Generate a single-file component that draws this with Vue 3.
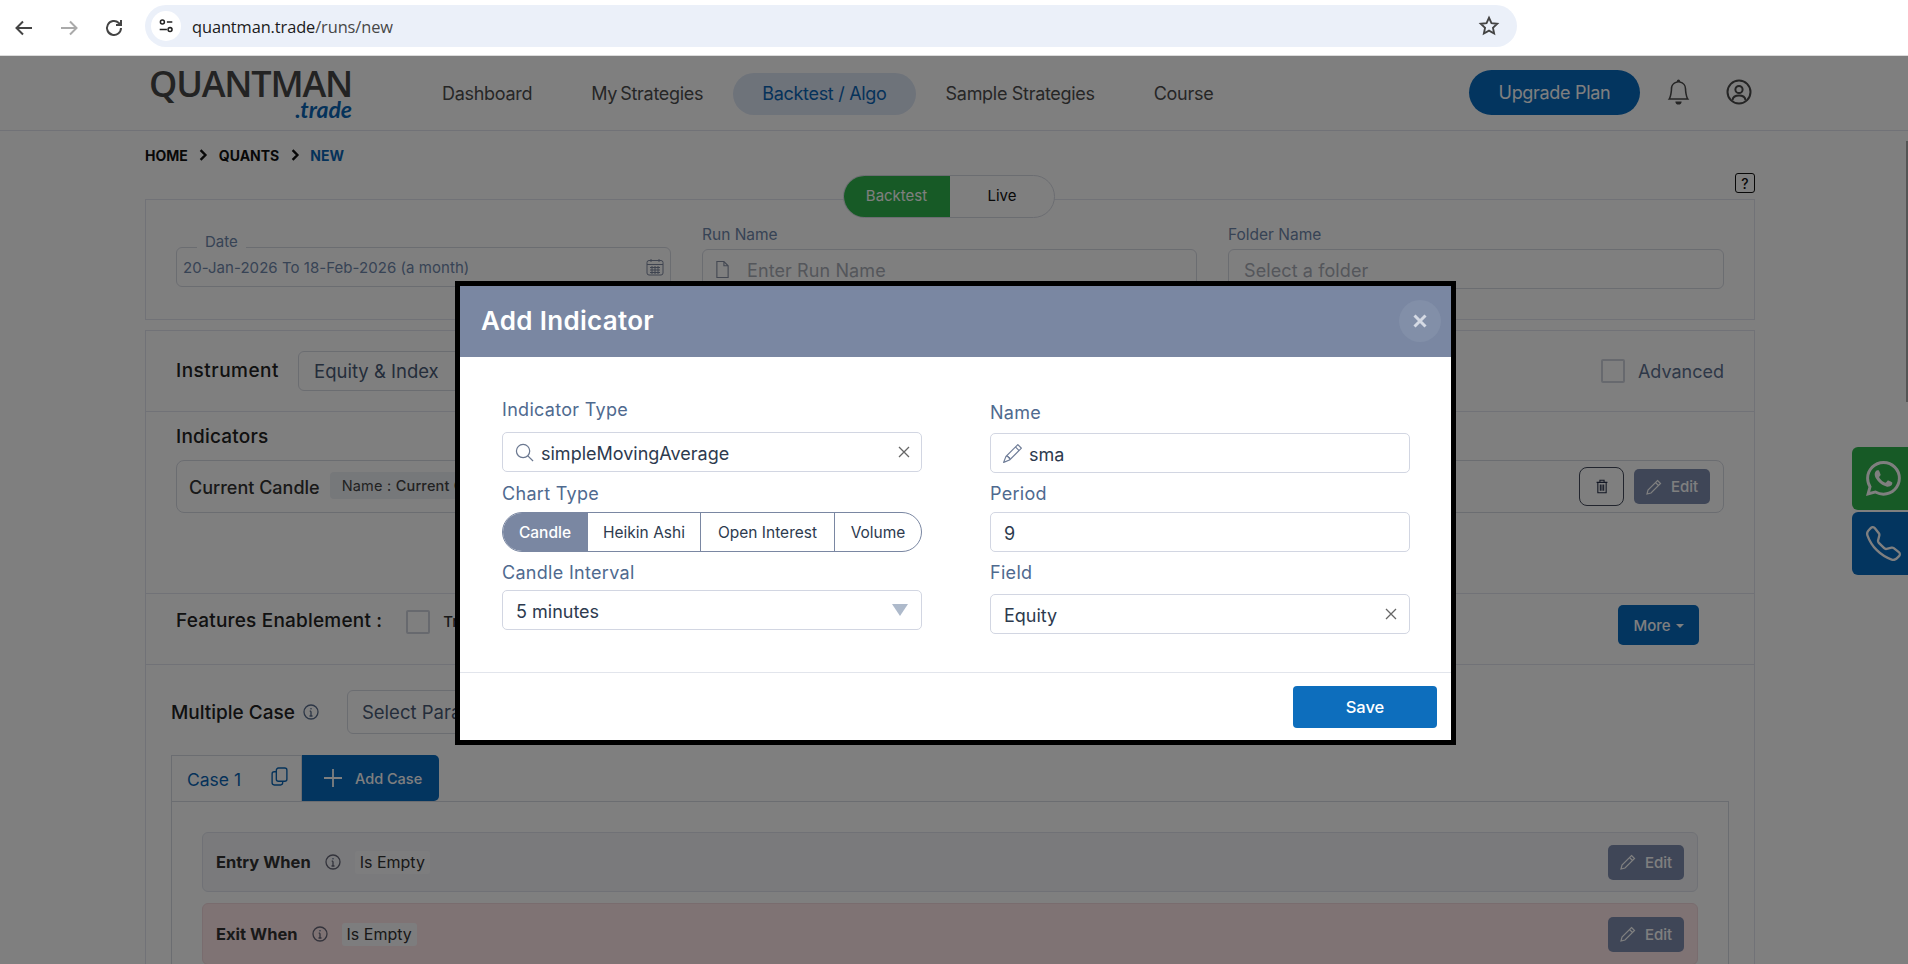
<script setup>
const navItems = [
  { label: 'Dashboard' },
  { label: 'My Strategies' },
  { label: 'Backtest / Algo', active: true },
  { label: 'Sample Strategies' },
  { label: 'Course' },
];

const chartTypes = ['Candle', 'Heikin Ashi', 'Open Interest', 'Volume'];

const caseRows = [
  { label: 'Entry When', tone: 'entry' },
  { label: 'Exit When', tone: 'exit' },
];

const icons = {
  pencil:
    'M12.146.146a.5.5 0 0 1 .708 0l3 3a.5.5 0 0 1 0 .708l-10 10a.5.5 0 0 1-.168.11l-5 2a.5.5 0 0 1-.65-.65l2-5a.5.5 0 0 1 .11-.168l10-10zM11.207 2.5 13.5 4.793 14.793 3.5 12.5 1.207 11.207 2.5zm1.586 3L10.5 3.207 4 9.707V10h.5a.5.5 0 0 1 .5.5v.5h.5a.5.5 0 0 1 .5.5v.5h.293l6.5-6.5zm-9.761 5.175-.106.106-1.528 3.821 3.821-1.528.106-.106A.5.5 0 0 1 5 12.5V12h-.5a.5.5 0 0 1-.5-.5V11h-.5a.5.5 0 0 1-.468-.325z',
  bell:
    'M8 16a2 2 0 0 0 2-2H6a2 2 0 0 0 2 2zM8 1.918l-.797.161A4.002 4.002 0 0 0 4 6c0 .628-.134 2.197-.459 3.742-.16.767-.376 1.566-.663 2.258h10.244c-.287-.692-.502-1.49-.663-2.258C12.134 8.197 12 6.628 12 6a4.002 4.002 0 0 0-3.203-3.92L8 1.917zM14.22 12c.223.447.481.801.78 1H1c.299-.199.557-.553.78-1C2.68 10.2 3 6.88 3 6c0-2.42 1.72-4.44 4.005-4.901a1 1 0 1 1 1.99 0A5.002 5.002 0 0 1 13 6c0 .88.32 4.2 1.22 6z',
  phone:
    'M3.654 1.328a.678.678 0 0 0-1.015-.063L1.605 2.3c-.483.484-.661 1.169-.45 1.77a17.568 17.568 0 0 0 4.168 6.608 17.569 17.569 0 0 0 6.608 4.168c.601.211 1.286.033 1.77-.45l1.034-1.034a.678.678 0 0 0-.063-1.015l-2.307-1.794a.678.678 0 0 0-.58-.122l-2.19.547a1.745 1.745 0 0 1-1.657-.459L5.482 8.062a1.745 1.745 0 0 1-.46-1.657l.548-2.19a.678.678 0 0 0-.122-.58L3.654 1.328zM1.884.511a1.745 1.745 0 0 1 2.612.163L6.29 2.98c.329.423.445.974.315 1.494l-.547 2.19a.678.678 0 0 0 .178.643l2.457 2.457a.678.678 0 0 0 .644.178l2.189-.547a1.745 1.745 0 0 1 1.494.315l2.306 1.794c.829.645.905 1.87.163 2.611l-1.034 1.034c-.74.74-1.846 1.065-2.877.702a18.634 18.634 0 0 1-7.01-4.42 18.634 18.634 0 0 1-4.42-7.009c-.362-1.03-.037-2.137.703-2.877L1.885.511z',
  whatsapp:
    'M13.601 2.326A7.854 7.854 0 0 0 7.994 0C3.627 0 .068 3.558.064 7.926c0 1.399.366 2.76 1.057 3.965L0 16l4.204-1.102a7.933 7.933 0 0 0 3.79.965h.004c4.368 0 7.926-3.558 7.93-7.93A7.898 7.898 0 0 0 13.6 2.326zM7.994 14.521a6.573 6.573 0 0 1-3.356-.92l-.24-.144-2.494.654.666-2.433-.156-.251a6.56 6.56 0 0 1-1.007-3.505c0-3.626 2.957-6.584 6.591-6.584a6.56 6.56 0 0 1 4.66 1.931 6.557 6.557 0 0 1 1.928 4.66c-.004 3.639-2.961 6.592-6.592 6.592zm3.615-4.934c-.197-.099-1.17-.578-1.353-.646-.182-.065-.315-.099-.445.099-.133.197-.513.646-.627.775-.114.133-.232.148-.43.05-.197-.1-.836-.308-1.592-.985-.59-.525-.985-1.175-1.103-1.372-.114-.198-.011-.304.088-.403.087-.088.197-.232.296-.346.1-.114.133-.198.198-.33.065-.134.034-.248-.015-.347-.05-.099-.445-1.076-.612-1.47-.16-.389-.323-.335-.445-.34-.114-.007-.247-.007-.38-.007a.729.729 0 0 0-.529.247c-.182.198-.691.677-.691 1.654 0 .977.71 1.916.81 2.049.098.133 1.394 2.132 3.383 2.992.47.205.84.326 1.129.418.475.152.904.129 1.246.08.38-.058 1.171-.48 1.338-.943.164-.464.164-.86.114-.943-.049-.084-.182-.133-.38-.232z',
};
</script>

<template>
  <div class="window">
    <header class="chrome">
      <svg class="chrome__nav" viewBox="0 0 24 24"><path d="M20 12H5M11 5.500 4.500 12l6.500 6.500" /></svg>
      <svg class="chrome__nav chrome__nav--off" viewBox="0 0 24 24"><path d="M4 12h15M13 5.500l6.500 6.500-6.500 6.500" /></svg>
      <svg class="chrome__nav" viewBox="0 0 24 24"><path d="M19 12a7 7 0 1 1-2.200-5.100L19 9M19 4v5h-5" /></svg>
      <div class="omnibox">
        <span class="omnibox__info">
          <svg viewBox="0 0 20 20"><circle cx="6" cy="5.500" r="2.200" /><path d="M11 5.500h6M3 14h8" /><circle cx="14.500" cy="14" r="2.200" /></svg>
        </span>
        <span class="omnibox__url">quantman.trade<span class="omnibox__path">/runs/new</span></span>
        <svg class="omnibox__star" viewBox="0 0 24 24"><path d="m12 3 2.700 5.900 6.300.7-4.700 4.300 1.300 6.300-5.600-3.200-5.600 3.200 1.300-6.300L3 9.600l6.300-.7z" /></svg>
      </div>
    </header>

    <div class="page">
      <nav class="topbar">
        <div class="logo">
          <span class="logo__name">QUANTMAN</span>
          <span class="logo__tld">.trade</span>
        </div>
        <div class="topbar__links">
          <a v-for="item in navItems" :key="item.label" class="topbar__link" :class="{ 'is-active': item.active }">{{ item.label }}</a>
        </div>
        <button class="upgrade">Upgrade Plan</button>
        <svg class="topbar__bell" viewBox="0 0 16 16"><path :d="icons.bell" /></svg>
        <svg class="topbar__user" viewBox="0 0 26 26">
          <circle cx="13" cy="13" r="11.500" />
          <circle cx="13" cy="10.500" r="3.600" />
          <path d="M6.500 21c.500-3.500 3-4.500 6.500-4.500s6 1 6.500 4.500" />
        </svg>
      </nav>

      <main class="content">
        <div class="crumbs">
          <span>HOME</span>
          <svg viewBox="0 0 10 10"><path d="m3 1 4 4-4 4" /></svg>
          <span>QUANTS</span>
          <svg viewBox="0 0 10 10"><path d="m3 1 4 4-4 4" /></svg>
          <span class="crumbs__current">NEW</span>
        </div>

        <section class="card card--run">
          <div class="mode">
            <span class="mode__item is-active">Backtest</span>
            <span class="mode__item">Live</span>
          </div>
          <span class="help">?</span>

          <div class="run-col">
            <div class="date-box">
              <span class="date-box__label">Date</span>
              <span class="date-box__value">20-Jan-2026 To 18-Feb-2026 (a month)</span>
              <svg class="date-box__icon" viewBox="0 0 18 18">
                <rect x="1" y="2.500" width="16" height="14.500" rx="2" />
                <path d="M1 6.500h16M5 1v3M13 1v3M4 9.500h10M4 12h10M4 14.500h10M6 8v8M9 8v8M12 8v8" />
              </svg>
            </div>
          </div>
          <div class="run-col">
            <label class="run-label">Run Name</label>
            <div class="run-input">
              <svg class="run-input__icon" viewBox="0 0 16 20"><path d="M2 1.500h7.500L14 6v12.500H2zM9.500 1.500V6H14" /></svg>
              <span class="run-input__hint">Enter Run Name</span>
            </div>
          </div>
          <div class="run-col">
            <label class="run-label">Folder Name</label>
            <div class="run-input run-input--folder">
              <span class="run-input__hint">Select a folder</span>
            </div>
          </div>
        </section>

        <section class="card card--main">
          <div class="instrument">
            <span class="section-title">Instrument</span>
            <div class="plain-select">Equity &amp; Index</div>
            <span class="check check--advanced"></span>
            <span class="advanced">Advanced</span>
          </div>

          <div class="indicators">
            <div class="section-title">Indicators</div>
            <div class="indicator-row">
              <span class="indicator-row__name">Current Candle</span>
              <span class="indicator-row__tag">Name : <b>Current Candle</b></span>
              <button class="trash-btn">
                <svg viewBox="0 0 16 18"><path d="M1.500 4h13M5.500 4V1.500h5V4M3 4v12.500h10V4M6 6.500v7.500M8 6.500v7.500M10 6.500v7.500" /></svg>
              </button>
              <button class="edit-btn">
                <svg viewBox="0 0 16 16"><path d="M11.500 1.500 14.500 4.500 5 14l-4 1 1-4zM9.500 3.500l3 3" /></svg>
                Edit
              </button>
            </div>
          </div>

          <div class="features">
            <span class="section-title features__title">Features Enablement :</span>
            <span class="check features__check"></span>
            <span class="features__item">Trailing</span>
            <button class="more">More <i class="more__caret"></i></button>
          </div>

          <div class="cases">
            <div class="cases__head">
              <span class="section-title">Multiple Case</span>
              <svg class="info" viewBox="0 0 16 16"><circle cx="8" cy="8" r="7" /><path d="M8 7.200V12M6.500 12h3M6.700 7.200H8" /><circle class="info__dot" cx="8" cy="4.700" r=".8" /></svg>
              <div class="plain-select plain-select--param">Select Parameters</div>
            </div>

            <div class="tabs">
              <div class="tab">
                <span class="tab__label">Case 1</span>
                <svg class="tab__copy" viewBox="0 0 16 18"><rect x="5" y="1" width="10" height="12.500" rx="2" /><path d="M5 4.500H3a2 2 0 0 0-2 2V15a2 2 0 0 0 2 2h6a2 2 0 0 0 2-2v-1.500" /></svg>
              </div>
              <button class="add-case">
                <svg viewBox="0 0 18 18"><path d="M9 0v18M0 9h18" /></svg>
                Add Case
              </button>
            </div>

            <div class="case-body">
              <div v-for="row in caseRows" :key="row.label" class="case-row" :class="`case-row--${row.tone}`">
                <span class="case-row__label">{{ row.label }}</span>
                <svg class="info case-row__info" viewBox="0 0 16 16"><circle cx="8" cy="8" r="7" /><path d="M8 7.200V12M6.500 12h3M6.700 7.200H8" /><circle class="info__dot" cx="8" cy="4.700" r=".8" /></svg>
                <span class="case-row__tag">Is Empty</span>
                <button class="edit-btn case-row__edit">
                  <svg viewBox="0 0 16 16"><path d="M11.500 1.500 14.500 4.500 5 14l-4 1 1-4zM9.500 3.500l3 3" /></svg>
                  Edit
                </button>
              </div>
            </div>
          </div>
        </section>
      </main>

      <div class="side-contact">
        <a class="side-contact__btn side-contact__btn--whatsapp">
          <svg viewBox="0 0 16 16"><path :d="icons.whatsapp" /></svg>
        </a>
        <a class="side-contact__btn side-contact__btn--phone">
          <svg viewBox="0 0 16 16"><path :d="icons.phone" /></svg>
        </a>
      </div>

      <div class="backdrop">
        <div class="scroll-thumb"></div>
        <div class="modal">
          <div class="modal__head">
            <h2 class="modal__title">Add Indicator</h2>
            <button class="modal__close">
              <svg viewBox="0 0 16 16"><path d="m2.500 2.500 11 11M13.500 2.500l-11 11" /></svg>
            </button>
          </div>

          <div class="modal__body">
            <div class="modal__col">
              <label class="field-label">Indicator Type</label>
              <div class="field field--type">
                <svg class="field__search" viewBox="0 0 20 20"><circle cx="8.500" cy="8.500" r="7" /><path d="m13.500 13.500 5.500 5.500" /></svg>
                <span class="field__value">simpleMovingAverage</span>
                <svg class="field__clear" viewBox="0 0 12 12"><path d="m1 1 10 10M11 1 1 11" /></svg>
              </div>

              <label class="field-label field-label--chart">Chart Type</label>
              <div class="segments">
                <span v-for="(chart, i) in chartTypes" :key="chart" class="segments__item" :class="{ 'is-active': i === 0 }">{{ chart }}</span>
              </div>

              <label class="field-label field-label--interval">Candle Interval</label>
              <div class="field field--interval">
                <span class="field__value">5 minutes</span>
                <i class="field__caret"></i>
              </div>
            </div>

            <div class="modal__col modal__col--right">
              <label class="field-label">Name</label>
              <div class="field field--name">
                <svg class="field__pencil" viewBox="0 0 16 16"><path :d="icons.pencil" /></svg>
                <span class="field__value">sma</span>
              </div>

              <label class="field-label field-label--period">Period</label>
              <div class="field field--period">
                <span class="field__value">9</span>
              </div>

              <label class="field-label field-label--field">Field</label>
              <div class="field field--equity">
                <span class="field__value">Equity</span>
                <svg class="field__clear" viewBox="0 0 12 12"><path d="m1 1 10 10M11 1 1 11" /></svg>
              </div>
            </div>
          </div>

          <div class="modal__foot">
            <button class="save">Save</button>
          </div>
        </div>
      </div>
    </div>
  </div>
</template>

<style>
html,
body {
  margin: 0;
  height: 100%;
  overflow: hidden;
}
</style>

<style scoped>
.window {
  width: 1908px;
  height: 964px;
  overflow: hidden;
  font-family: Inter, "Noto Sans", sans-serif;
  background: #fff;
}

button {
  font-family: inherit;
  border: 0;
  cursor: pointer;
}

svg {
  display: block;
  flex-shrink: 0;
  fill: none;
}

/* browser bar */
.chrome {
  height: 56px;
  display: flex;
  align-items: center;
  padding-left: 12px;
  box-sizing: border-box;
  background: #fff;
  border-bottom: 1px solid #dcdcdc;
}

.chrome__nav {
  width: 24px;
  height: 24px;
  margin-right: 21px;
  stroke: #444;
  stroke-width: 2;
}

.chrome__nav--off {
  stroke: #aaa;
}

.omnibox {
  width: 1372px;
  height: 42px;
  margin-left: -2px;
  margin-top: -3px;
  display: flex;
  align-items: center;
  padding: 0 17px 0 6px;
  box-sizing: border-box;
  border-radius: 21px;
  background: #ebf0f9;
}

.omnibox__info {
  width: 30px;
  height: 30px;
  display: flex;
  align-items: center;
  justify-content: center;
  border-radius: 50%;
  background: #fff;
}

.omnibox__info svg {
  width: 18px;
  height: 18px;
  stroke: #222;
  stroke-width: 1.700;
}

.omnibox__url {
  margin-left: 11px;
  font-family: "Open Sans", sans-serif;
  font-size: 16.400px;
  letter-spacing: -0.1px;
  color: #1b1b1b;
}

.omnibox__path {
  color: #474747;
}

.omnibox__star {
  width: 22px;
  height: 22px;
  margin-left: auto;
  stroke: #444;
  stroke-width: 2;
}

/* page */
.page {
  position: relative;
  height: 908px;
  overflow: hidden;
  background: #fff;
}

.topbar {
  height: 75px;
  display: flex;
  align-items: center;
  box-sizing: border-box;
  padding-left: 152px;
  border-bottom: 1px solid #e2e4ee;
}

.logo {
  width: 200px;
  display: flex;
  flex-direction: column;
  align-items: flex-end;
}

.logo__name {
  font-family: "Open Sans", sans-serif;
  font-size: 36px;
  font-weight: 600;
  line-height: 32px;
  letter-spacing: -1.200px;
  color: #474747;
}

.logo__tld {
  font-family: Lato, sans-serif;
  font-size: 23px;
  font-style: italic;
  font-weight: 700;
  line-height: 18px;
  color: #0a65b4;
}

.topbar__links {
  display: flex;
  align-items: center;
  margin-left: 60.500px;
  margin-top: 1px;
}

.topbar__link {
  padding: 0 29.500px;
  height: 42px;
  line-height: 42px;
  border-radius: 21px;
  font-size: 18px;
  letter-spacing: -0.300px;
  color: #4d4d4d;
}

.topbar__link:nth-child(2) {
  word-spacing: -1.500px;
}

.topbar__link.is-active {
  background: #dde6f5;
  color: #0a65b4;
}

.upgrade {
  width: 171px;
  height: 45px;
  margin-left: auto;
  margin-top: -2px;
  border-radius: 23px;
  background: #076abf;
  color: #fff;
  font-size: 18px;
  letter-spacing: -0.300px;
}

.topbar__bell {
  width: 25px;
  height: 26px;
  margin-left: 26px;
  margin-top: -2px;
  fill: #4a4a4a;
}

.topbar__user {
  width: 26px;
  height: 26px;
  margin-left: 35px;
  margin-right: 156px;
  margin-top: -2px;
  stroke: #4a4a4a;
  stroke-width: 2;
}

.content {
  width: 1610px;
  margin-left: 145px;
}

.crumbs {
  height: 20px;
  margin-top: 14px;
  display: flex;
  align-items: center;
  font-size: 14px;
  font-weight: 700;
  color: #111;
}

.crumbs svg {
  width: 12px;
  height: 12px;
  margin: 0 9.500px;
  stroke: #111;
  stroke-width: 2;
}

.crumbs__current {
  color: #0a65b4;
}

.card {
  box-sizing: border-box;
  border: 1px solid #e2e4ee;
  background: #fff;
}

.card--run {
  position: relative;
  height: 121px;
  margin-top: 34px;
  padding: 25px 30px 0;
  display: grid;
  grid-template-columns: 495px 495px 496px;
  column-gap: 31px;
}

.card--main {
  margin-top: 10px;
}

.mode {
  position: absolute;
  top: -25px;
  left: 697px;
  width: 212px;
  height: 43px;
  display: flex;
  overflow: hidden;
  box-sizing: border-box;
  border: 1px solid #d7dae3;
  border-radius: 22px;
  background: #fff;
  font-size: 15px;
}

.mode__item {
  flex: 1;
  display: flex;
  align-items: center;
  justify-content: center;
  padding-bottom: 2px;
  color: #111;
}

.mode__item.is-active {
  flex: 0 0 107px;
  margin: -1px 0 -1px -1px;
  background: #2eb44c;
  color: #fff;
}

.help {
  position: absolute;
  top: -27px;
  right: -1px;
  width: 20px;
  height: 20px;
  box-sizing: border-box;
  display: flex;
  align-items: center;
  justify-content: center;
  border: 1.500px solid #111;
  border-radius: 3px;
  font-size: 14px;
  font-weight: 500;
  color: #111;
}

.date-box {
  position: relative;
  height: 40px;
  margin-top: 22px;
  display: flex;
  align-items: center;
  padding: 0 6px;
  box-sizing: border-box;
  border: 1px solid #d7dae3;
  border-radius: 6px;
}

.date-box__label {
  position: absolute;
  top: -16px;
  left: 20px;
  padding: 0 8px;
  background: #fff;
  font-size: 15px;
  line-height: 20px;
  color: #6e86aa;
}

.date-box__value {
  font-size: 15px;
  letter-spacing: 0.050px;
  color: #6f87ab;
}

.date-box__icon {
  width: 18px;
  height: 18px;
  margin-left: auto;
  stroke: #7e88a0;
  stroke-width: 1;
}

.run-label {
  display: block;
  height: 20px;
  font-size: 15.500px;
  line-height: 20px;
  color: #6e86aa;
}

.run-input {
  height: 40px;
  margin-top: 4px;
  display: flex;
  align-items: center;
  padding: 0 12px;
  box-sizing: border-box;
  border: 1px solid #d7dae3;
  border-radius: 6px;
}

.run-input--folder {
  padding-left: 15px;
}

.run-input__icon {
  width: 15px;
  height: 19px;
  margin: 0 17px 0 0;
  stroke: #8891a5;
  stroke-width: 1.200;
}

.run-input__hint {
  margin-top: 3px;
  font-size: 18px;
  letter-spacing: 0.100px;
  color: #a9adb6;
}

.section-title {
  font-size: 19px;
  font-weight: 500;
  line-height: 20px;
  letter-spacing: 0.200px;
  color: #222;
}

.instrument {
  height: 81px;
  display: flex;
  align-items: center;
  padding: 0 30px;
  box-sizing: border-box;
  border-bottom: 1px solid #e2e4ee;
}

.instrument .section-title {
  letter-spacing: 0.500px;
}

.plain-select {
  height: 40px;
  width: 300px;
  margin-left: 19px;
  display: flex;
  align-items: center;
  padding: 0 15px;
  box-sizing: border-box;
  border: 1px solid #d7dae3;
  border-radius: 6px;
  font-size: 18.500px;
  color: #4a5b76;
}

.check {
  width: 24px;
  height: 24px;
  box-sizing: border-box;
  border: 2px solid #cfd3dc;
  border-radius: 2px;
  background: #fff;
}

.check--advanced {
  margin-left: auto;
}

.advanced {
  margin-left: 13px;
  font-size: 18px;
  color: #5c7090;
}

.indicators {
  height: 182px;
  padding: 15px 30px 0;
  box-sizing: border-box;
  border-bottom: 1px solid #e2e4ee;
}

.indicator-row {
  height: 53px;
  margin-top: 13px;
  display: flex;
  align-items: center;
  padding: 0 13px 0 12px;
  box-sizing: border-box;
  border: 1px solid #d7dae3;
  border-radius: 8px;
}

.indicator-row__name {
  padding-top: 2px;
  font-size: 18px;
  font-weight: 500;
  color: #333;
}

.indicator-row__tag {
  margin-left: 10px;
  margin-top: -3px;
  padding: 4px 12px;
  border-radius: 4px;
  background: #edf0f5;
  font-size: 14.500px;
  line-height: 19px;
  letter-spacing: 0.200px;
  color: #444;
}

.indicator-row__tag b {
  font-weight: 500;
}

.trash-btn {
  width: 45px;
  height: 39px;
  margin-left: auto;
  display: flex;
  align-items: center;
  justify-content: center;
  box-sizing: border-box;
  border: 1px solid #444b5c;
  border-radius: 8px;
  background: #fff;
}

.trash-btn svg {
  width: 14px;
  height: 15px;
  stroke: #26304a;
  stroke-width: 1.300;
}

.edit-btn {
  width: 76px;
  height: 35px;
  margin-left: 10px;
  display: flex;
  align-items: center;
  justify-content: center;
  gap: 9px;
  border-radius: 5px;
  background: #7f8daf;
  color: #fff;
  font-size: 15px;
  font-weight: 500;
}

.edit-btn svg {
  width: 16px;
  height: 16px;
  stroke: #fff;
  stroke-width: 1.200;
}

.features {
  height: 71px;
  display: flex;
  align-items: center;
  padding: 0 55px 20px 30px;
  box-sizing: border-box;
  border-bottom: 1px solid #e2e4ee;
}

.features__title {
  margin-top: 12px;
  margin-bottom: 8px;
}

.features__check {
  margin-left: 24px;
  margin-top: 10px;
  margin-bottom: 4px;
}

.features__item {
  margin-left: 13px;
  margin-top: 12px;
  margin-bottom: 8px;
  font-size: 15px;
  font-weight: 500;
  color: #333;
}

.more {
  width: 81px;
  height: 40px;
  margin-left: auto;
  margin-top: 12px;
  border-radius: 5px;
  background: #076abf;
  color: #fff;
  font-size: 15px;
  font-weight: 500;
}

.more__caret {
  display: inline-block;
  margin-left: 1px;
  vertical-align: 3px;
  border-top: 4px solid #fff;
  border-left: 4px solid transparent;
  border-right: 4px solid transparent;
}

.cases {
  padding: 25px 25px 0;
}

.cases__head {
  height: 44px;
  display: flex;
  align-items: center;
}

.cases__head .section-title {
  padding-top: 2px;
  letter-spacing: 0;
}

.info {
  width: 16px;
  height: 16px;
  margin-left: 8px;
  stroke: #5a6d8c;
  stroke-width: 1.300;
}

.info__dot {
  fill: #5a6d8c;
  stroke: none;
}

.plain-select--param {
  height: 44px;
  margin-left: 28px;
  padding-left: 14px;
}

.tabs {
  height: 46px;
  margin-top: 21px;
  display: flex;
}

.tab {
  width: 131px;
  display: flex;
  align-items: center;
  padding-left: 15px;
  box-sizing: border-box;
  border: 1px solid #d7dae3;
  border-bottom: 0;
}

.tab__label {
  padding-top: 2px;
  font-size: 17.500px;
  color: #0a65b4;
}

.tab__copy {
  width: 17px;
  height: 19px;
  margin-left: 30px;
  margin-top: -4px;
  stroke: #0a65b4;
  stroke-width: 1.300;
}

.add-case {
  width: 137px;
  display: flex;
  align-items: center;
  padding-left: 22px;
  gap: 13px;
  border-radius: 0 5px 5px 0;
  background: #076abf;
  color: #fff;
  font-size: 14.500px;
  font-weight: 500;
}

.add-case svg {
  width: 18px;
  height: 18px;
  stroke: #fff;
  stroke-width: 1.800;
}

.case-body {
  padding: 30px 30px 40px;
  box-sizing: border-box;
  border: 1px solid #d7dae3;
}

.case-row {
  height: 60px;
  display: flex;
  align-items: center;
  padding: 0 13px;
  box-sizing: border-box;
  border: 1px solid #e0e3ec;
  border-radius: 6px;
  background: #f4f5f9;
}

.case-row + .case-row {
  height: 62px;
  margin-top: 11px;
}

.case-row--exit {
  border-color: #f2d8dc;
  background: #ffe6e8;
}

.case-row__label {
  font-size: 16.500px;
  font-weight: 700;
  color: #333;
}

.case-row__info {
  margin-left: 14px;
  stroke: #667;
}

.case-row__tag {
  margin-left: 14px;
  padding: 2px 5px;
  border-radius: 3px;
  background: #fbfbfd;
  font-size: 16px;
  line-height: 19px;
  color: #333;
}

.case-row__edit {
  margin-left: auto;
}

/* floating contact buttons */
.side-contact {
  position: absolute;
  top: 391px;
  right: 0;
  display: flex;
  flex-direction: column;
  gap: 2px;
}

.side-contact__btn {
  width: 56px;
  height: 63px;
  display: flex;
  align-items: center;
  padding-left: 14px;
  box-sizing: border-box;
  border-radius: 6px 0 0 6px;
}

.side-contact__btn svg {
  width: 35px;
  height: 35px;
  fill: #fff;
}

.side-contact__btn--whatsapp {
  background: #2eb44c;
}

.side-contact__btn--phone {
  background: #076abf;
}

/* modal */
.backdrop {
  position: absolute;
  inset: 0;
  display: flex;
  justify-content: center;
  align-items: flex-start;
  padding: 225px 0 0 3px;
  box-sizing: border-box;
  background: rgba(0, 0, 0, 0.5);
}

.scroll-thumb {
  position: absolute;
  top: 85px;
  right: 0;
  width: 2px;
  height: 261px;
  background: #555;
}

.modal {
  width: 1001px;
  height: 464px;
  box-sizing: border-box;
  border: 5px solid #000;
  background: #fff;
}

.modal__head {
  height: 71px;
  display: flex;
  align-items: center;
  justify-content: space-between;
  padding: 0 10px 2px 21px;
  box-sizing: border-box;
  background: #7a87a2;
}

.modal__title {
  margin: 0;
  font-size: 26px;
  font-weight: 600;
  letter-spacing: 0.300px;
  color: #fff;
}

.modal__close {
  width: 42px;
  height: 42px;
  display: flex;
  align-items: center;
  justify-content: center;
  padding: 0;
  border-radius: 50%;
  background: #828fa8;
}

.modal__close svg {
  width: 16px;
  height: 16px;
  stroke: #d5dae4;
  stroke-width: 3;
}

.modal__body {
  height: 316px;
  display: grid;
  grid-template-columns: 420px 420px;
  column-gap: 68px;
  padding: 41px 0 0 42px;
  box-sizing: border-box;
  border-bottom: 1px solid #e2e5ec;
}

.modal__col--right {
  padding-top: 3px;
}

.field-label {
  display: block;
  height: 22px;
  font-size: 18px;
  line-height: 24px;
  letter-spacing: 0.300px;
  color: #4f6a8f;
}

.field-label--chart {
  margin-top: 10px;
}

.field-label--interval,
.field-label--period,
.field-label--field {
  margin-top: 9px;
}

.field {
  height: 40px;
  display: flex;
  align-items: center;
  padding: 0 12px;
  box-sizing: border-box;
  border: 1px solid #d2d6e2;
  border-radius: 5px;
  background: #fff;
}

.field--type {
  margin-top: 12px;
  padding-right: 11px;
}

.field--name {
  margin-top: 10px;
}

.field--period {
  margin-top: 8px;
  padding-left: 13px;
}

.field--equity {
  margin-top: 11px;
  padding-left: 13px;
}

.field--interval {
  margin-top: 7px;
  padding-left: 13px;
}

.field__value {
  padding-top: 2px;
  font-size: 18px;
  color: #2d3a4e;
}

.field__search {
  width: 19px;
  height: 19px;
  margin-right: 7px;
  stroke: #6b7890;
  stroke-width: 1.300;
}

.field__pencil {
  width: 19px;
  height: 19px;
  margin-right: 7px;
  fill: #6f7d98;
}

.field__clear {
  width: 12px;
  height: 12px;
  margin-left: auto;
  stroke: #666;
  stroke-width: 1.300;
}

.field__caret {
  margin-left: auto;
  margin-right: 1px;
  border-top: 12px solid #aebacb;
  border-left: 8.500px solid transparent;
  border-right: 8.500px solid transparent;
}

.segments {
  height: 40px;
  margin-top: 8px;
  display: flex;
  box-sizing: border-box;
  overflow: hidden;
  border: 1px solid #7a87a2;
  border-radius: 20px;
  font-size: 15.500px;
  color: #2d3a4e;
}

.segments__item {
  display: flex;
  align-items: center;
  justify-content: center;
  border-left: 1px solid #7a87a2;
  box-sizing: border-box;
  width: 113px;
}

.segments__item:nth-child(3) {
  width: 134px;
}

.segments__item:nth-child(4) {
  flex: 1;
}

.segments__item.is-active {
  width: 84px;
  border-left: 0;
  background: #7a87a2;
  color: #fff;
  font-weight: 500;
}

.modal__foot {
  height: 67px;
  display: flex;
  justify-content: flex-end;
  padding: 13px 14px 0 0;
  box-sizing: border-box;
}

.save {
  width: 144px;
  height: 42px;
  border-radius: 4px;
  background: #0d6ebd;
  color: #fff;
  font-size: 16.500px;
  font-weight: 500;
}
</style>
